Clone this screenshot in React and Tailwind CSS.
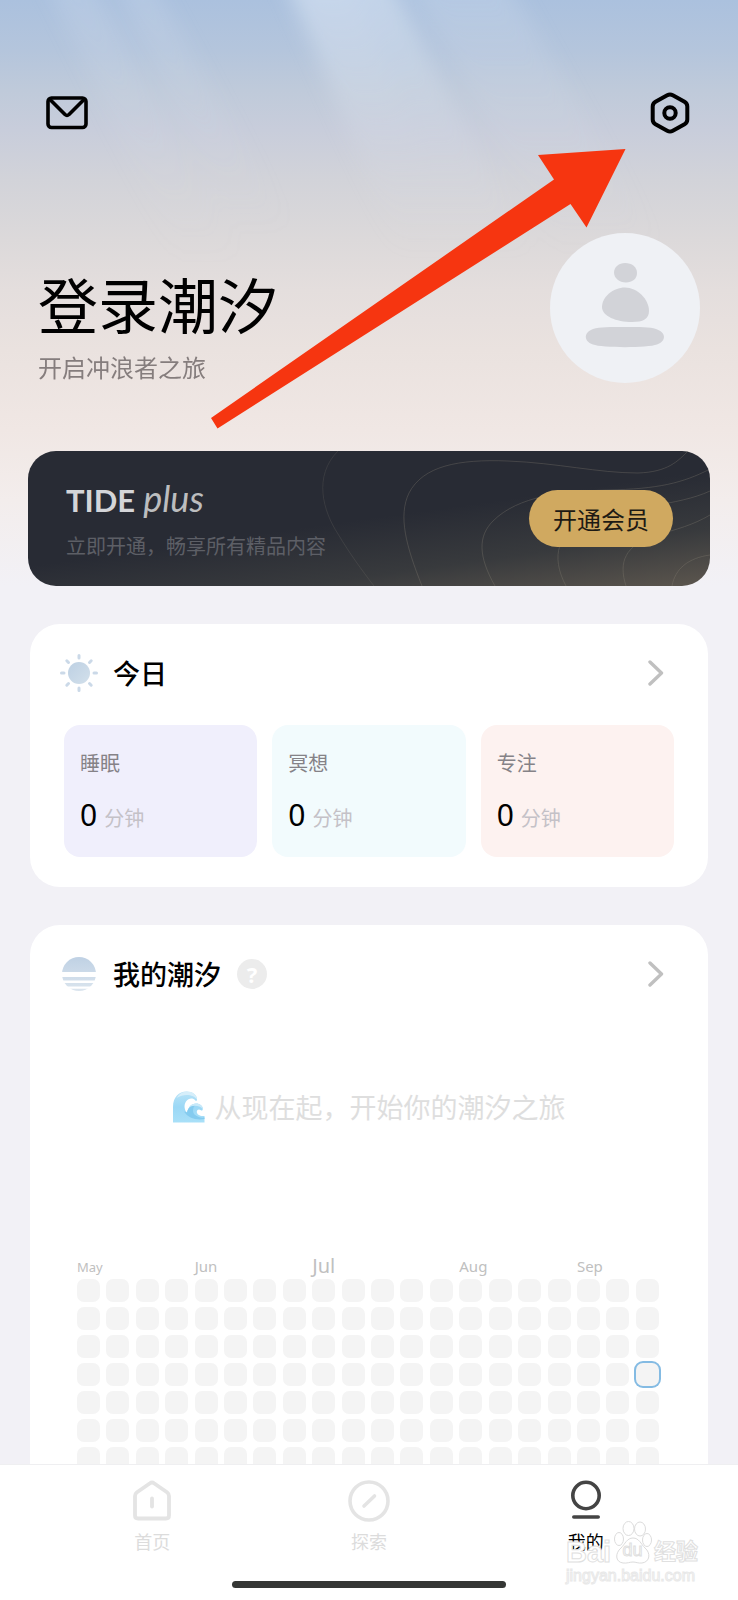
import React from 'react';

const stats = [
  { id: 'sleep', label: '睡眠', value: 0, bg: 'bg-[#f0effc]' },
  { id: 'meditation', label: '冥想', value: 0, bg: 'bg-[#f2fbfd]' },
  { id: 'focus', label: '专注', value: 0, bg: 'bg-[#fdf2f0]' },
];

const WEEKS = 20;
const DAYS = 7;
const today = { week: 19, day: 3 };

const months = {
  0: { name: 'May', size: 'text-[13px]' },
  4: { name: 'Jun', size: 'text-[15px]' },
  8: { name: 'Jul', size: 'text-[20px]' },
  13: { name: 'Aug', size: 'text-[15px]' },
  17: { name: 'Sep', size: 'text-[15px]' },
};

const MailIcon = () => (
  <svg width="42" height="34" viewBox="0 0 42 34" fill="none" stroke="#000" strokeWidth="3.6" strokeLinejoin="round" strokeLinecap="round">
    <rect x="2" y="2" width="38" height="29.5" rx="3.5" />
    <path d="M4 3.5 L19 18.5 Q21 20.3 23 18.5 L38 3.5" />
  </svg>
);

const SettingsIcon = () => (
  <svg width="40" height="42" viewBox="0 0 40 42" fill="none" stroke="#000" strokeWidth="4">
    <path d="M17.2 3.2 Q20 1.6 22.8 3.2 L34.5 9.8 Q37.3 11.5 37.3 14.6 V27.4 Q37.3 30.5 34.5 32.2 L22.8 38.8 Q20 40.4 17.2 38.8 L5.5 32.2 Q2.7 30.5 2.7 27.4 V14.6 Q2.7 11.5 5.5 9.8 Z" />
    <circle cx="20" cy="21" r="5.7" />
  </svg>
);

const AvatarIcon = () => (
  <svg className="w-full h-full" viewBox="0 0 150 150" fill="#d2d3d8">
    <path d="M75 30 C82 30 87 34 87 40 C87 46 82 49.500 76 49.500 C69 49.500 64 45 64 39.500 C64 34 69 30 75 30 Z" />
    <path d="M75 54.500 C87 54.500 99 66 99 78 C99 86 93 89 82 89 C66 89 52 83 52 74 C52 64 63 54.500 75 54.500 Z" />
    <path d="M75 94 C90 94 100 94 106 96 C116 99 117 108 107 111.500 C98 115 52 115 43 111.500 C33 108 34 99 43 96 C50 94 60 94 75 94 Z" />
  </svg>
);

const SunIcon = () => (
  <svg width="38" height="38" viewBox="0 0 38 38" fill="none">
    <defs>
      <linearGradient id="sun" x1="0" y1="0" x2="1" y2="1">
        <stop offset="0" stopColor="#bdd0e3" />
        <stop offset="1" stopColor="#d3e0eb" />
      </linearGradient>
    </defs>
    <circle cx="19" cy="19" r="11" fill="url(#sun)" />
    <g stroke="#cbd9e8" strokeWidth="3" strokeLinecap="round">
      <path d="M19 1.500V4M19 34V36.500M1.500 19H4M34 19H36.500M6.800 6.800L8.500 8.500M29.500 29.500L31.200 31.200M6.800 31.200L8.500 29.500M29.500 8.500L31.200 6.800" />
    </g>
  </svg>
);

const TideIcon = () => (
  <svg width="38" height="38" viewBox="0 0 38 38">
    <defs>
      <linearGradient id="tide" x1="0" y1="0" x2="0" y2="1">
        <stop offset="0" stopColor="#bfd1e4" />
        <stop offset="1" stopColor="#dbe5ee" />
      </linearGradient>
      <clipPath id="tide-bands">
        <path d="M0 0H38V17H0ZM0 22H38V25.500H0ZM0 28H38V31.500H0ZM0 33.800H38V38H0Z" />
      </clipPath>
    </defs>
    <circle cx="19" cy="19" r="17" fill="url(#tide)" clipPath="url(#tide-bands)" />
  </svg>
);

const WaveIcon = () => (
  <svg width="32" height="32" viewBox="0 0 32 32">
    <defs>
      <linearGradient id="wave" x1="0" y1="0" x2="0" y2="1">
        <stop offset="0" stopColor="#b9e3f7" />
        <stop offset="0.5" stopColor="#9bd8f6" />
        <stop offset="1" stopColor="#a9e0f8" />
      </linearGradient>
    </defs>
    <path d="M0 31.500V16C0 6 6 0.500 13.500 0.500C19.500 0.500 24 4 24 8.500C24 9.800 23.200 10.500 22.300 9.500C20 6.500 15.500 7 13 10.500C10.500 14 11.500 19.500 14 21.500C15 16.500 18.500 12.500 23 12.500C27 12.500 30 15 29.800 18C29.600 19.800 28.500 19.800 27.500 18.900C26 17.800 24 18.500 23.800 20.500C23.600 23.500 27 25.500 31.500 25V31.500Z" fill="url(#wave)" />
    <path d="M3.500 7C6.500 2.500 10 0.500 13.500 0.500C19.500 0.500 24 4 24 8.500C21 3.500 11 2 3.500 7Z" fill="#d6eefa" />
    <path d="M14 21.500C15 16.500 18.500 14.500 22 14.500C19.500 17 19.500 21 21.500 23.500C24 26 28 27 31.500 26.500V28C23 29.500 15 27 11 20.500Z" fill="#84cbef" />
    <path d="M16 16C18 13 21 12.500 23 12.500C27 12.500 30 15 29.800 18C26.500 14.500 21 14 16 16Z" fill="#c8e9f9" />
  </svg>
);

const ChevronIcon = () => (
  <svg width="16" height="26" viewBox="0 0 16 26" fill="none" stroke="#c0c0c0" strokeWidth="3.400" strokeLinecap="round" strokeLinejoin="round">
    <path d="M2 2L13.500 13L2 24" />
  </svg>
);

const HomeIcon = () => (
  <svg width="42" height="42" viewBox="0 0 42 42" fill="none" stroke="#e4e4e4" strokeWidth="3.800" strokeLinecap="round" strokeLinejoin="round">
    <path d="M19 3.300Q21 1.800 23 3.300L36 12.200Q38 13.700 38 16V35.500Q38 38.500 35 38.500H7Q4 38.500 4 35.500V16Q4 13.700 6 12.200Z" />
    <path d="M21 18.500V26.500" />
  </svg>
);

const ExploreIcon = () => (
  <svg width="42" height="42" viewBox="0 0 42 42" fill="none" stroke="#e4e4e4" strokeWidth="3.600" strokeLinecap="round">
    <circle cx="21" cy="21" r="19" />
    <path d="M16 26L26.500 16" />
  </svg>
);

const MineIcon = () => (
  <svg width="42" height="42" viewBox="0 0 42 42" fill="none" stroke="#444" strokeWidth="3.600" strokeLinecap="round">
    <circle cx="21" cy="15.500" r="13.200" />
    <path d="M8.800 37H33.200" />
  </svg>
);

const SkyRays = () => (
  <svg className="absolute inset-x-0 top-0 w-full h-[300px]" viewBox="0 0 738 300" preserveAspectRatio="none" aria-hidden="true">
    <defs>
      <linearGradient id="ray" x1="0" y1="0" x2="0" y2="1">
        <stop offset="0" stopColor="#dbe8f6" stopOpacity="0.55" />
        <stop offset="1" stopColor="#dcdce4" stopOpacity="0" />
      </linearGradient>
      <filter id="soft" x="-20%" y="-20%" width="140%" height="140%">
        <feGaussianBlur stdDeviation="10" />
      </filter>
    </defs>
    <g fill="url(#ray)" filter="url(#soft)">
      <path d="M280 -30H385L530 250H400Z" />
      <path d="M280 -30H345L430 180H370Z" opacity="0.25" />
      <path d="M400 -30H500L660 250H560Z" opacity="0.45" />
      <path d="M40 -30H85L240 260H180Z" opacity="0.4" />
      <path d="M110 -30H145L290 230H230Z" opacity="0.4" />
    </g>
  </svg>
);

const CardHeader = ({ icon, title, extra }) => (
  <div className="flex items-center h-10 pl-[30px] pr-11">
    {icon}
    <h2 className="ml-[15px] text-[27px] leading-10 font-medium text-black">{title}</h2>
    {extra}
    <button className="ml-auto" aria-label={title}>
      <ChevronIcon />
    </button>
  </div>
);

const PlusCard = () => (
  <section className="relative mx-7 mt-[68px] h-[135px] rounded-[28px] overflow-hidden flex items-center justify-between pl-[38px] pr-[37px] bg-[#282b34] bg-[linear-gradient(172deg,#282b34_50%,#383a3d_75%,#5c564e_100%)]">
    <svg className="absolute inset-0 w-full h-full" viewBox="0 0 682 135" preserveAspectRatio="none" fill="none" stroke="#8b8578" strokeOpacity="0.3" aria-hidden="true">
      <path d="M310 0C285 25 295 60 310 83C322 103 333 118 346 135" strokeOpacity="0.18" />
      <path d="M394 135C378 95 370 65 381 42C395 15 430 8 480 10C530 12 570 22 610 22C640 21 650 10 660 0" />
      <path d="M467 135C450 105 450 85 465 70C490 45 535 40 580 39C630 38 655 32 682 18" />
      <path d="M538 135C522 105 530 80 560 70C600 55 650 55 682 40" />
      <path d="M598 135C590 110 598 95 625 85C650 78 665 74 682 64" />
      <path d="M644 135C647 118 660 107 682 104" />
    </svg>
    <div className="relative">
      <div className="flex items-baseline gap-2 leading-10 text-[#d4d5d8]">
        <span className="font-['Lato',sans-serif] text-[31px] font-bold">TIDE</span>
        <span className="font-['Lato',sans-serif] text-[36px] italic text-[#bcbdbf]">plus</span>
      </div>
      <p className="mt-3 text-[20px] leading-7 text-[#5d5f66]">立即开通，畅享所有精品内容</p>
    </div>
    <button className="relative h-[57px] px-6 rounded-full bg-[#d0a960] text-[24px] leading-8 text-[#1d1a14]">
      开通会员
    </button>
  </section>
);

const TodayCard = () => (
  <section className="mx-[30px] mt-[38px] pt-[29px] pb-[30px] rounded-[30px] bg-white">
    <CardHeader icon={<SunIcon />} title="今日" />
    <div className="mt-8 px-[34px] grid grid-cols-3 gap-[15px]">
      {stats.map((item) => (
        <div key={item.id} className={`${item.bg} h-[132px] rounded-2xl px-4 pt-6`}>
          <p className="text-[20px] leading-7 text-[#858287]">{item.label}</p>
          <p className="mt-5 flex items-baseline gap-[7px] leading-9">
            <span className="font-['Noto_Sans',sans-serif] text-[30px] text-black">{item.value}</span>
            <span className="text-[20px] text-[#c4c1c7]">分钟</span>
          </p>
        </div>
      ))}
    </div>
  </section>
);

const Heatmap = () => (
  <div className="mt-[126px] pl-[47px] pr-[49px] flex justify-between">
    {Array.from({ length: WEEKS }, (_, week) => (
      <div key={week} className="w-[23px] flex flex-col gap-[5px]">
        <div className="h-[22px] -mb-px leading-[26px] whitespace-nowrap font-['Noto_Sans',sans-serif] text-[#c0c0c0]">
          {months[week] && <span className={months[week].size}>{months[week].name}</span>}
        </div>
        {Array.from({ length: DAYS }, (_, day) => (
          <div
            key={day}
            className={`w-[23px] h-[23px] rounded-[7px] bg-[#f4f4f4] ${
              week === today.week && day === today.day ? 'ring-2 ring-[#84bbe3]' : ''
            }`}
          />
        ))}
      </div>
    ))}
  </div>
);

const TideCard = () => (
  <section className="mx-[30px] mt-[38px] pt-[29px] pb-10 rounded-[30px] bg-white">
    <CardHeader
      icon={<TideIcon />}
      title="我的潮汐"
      extra={
        <button className="ml-4 w-[30px] h-[30px] rounded-full bg-[#ececec] font-['Noto_Sans',sans-serif] text-[22px] leading-[30px] font-bold text-white">
          ?
        </button>
      }
    />
    <div className="mt-[93px] flex items-center justify-center gap-2.5 text-[27px] leading-10 text-[#dedede]">
      <WaveIcon />
      <p>从现在起，开始你的潮汐之旅</p>
    </div>
    <Heatmap />
  </section>
);

const Watermark = () => (
  <div className="absolute right-10 bottom-3 w-[132px] text-white pointer-events-none font-['Liberation_Sans','Noto_Sans_CJK_SC',sans-serif] [-webkit-text-stroke:1px_#e0e0e0]">
    <div className="flex items-end justify-between h-11">
      <span className="text-[29px] leading-6 font-bold">Bai</span>
      <span className="relative w-[38px] h-[43px]">
        <svg className="absolute inset-0" width="38" height="43" viewBox="0 0 38 43" fill="#fff" stroke="#dcdcdc">
          <ellipse cx="14.500" cy="7.500" rx="5.500" ry="7" />
          <ellipse cx="26" cy="8" rx="5.500" ry="7" />
          <ellipse cx="5" cy="18" rx="4.500" ry="6.500" />
          <ellipse cx="33" cy="19" rx="4.500" ry="6.500" />
          <path d="M19 17C25 17 27 23 31 27C37 32 36 41 28 42C24 42.500 22 41 19 41C16 41 13 42.500 9 42C1 41 1 32 7 27C11 23 13 17 19 17Z" />
        </svg>
        <span className="absolute inset-x-0 bottom-1 text-center text-[18px] leading-5">du</span>
      </span>
      <span className="text-[22px] leading-6 font-bold">经验</span>
    </div>
    <p className="text-[16px] leading-6 [-webkit-text-stroke:1px_#e8e8e8]">jingyan.baidu.com</p>
  </div>
);

const TabBar = () => (
  <nav className="relative shrink-0 bg-white border-t border-[#efeff1]">
    <div className="px-11 pt-[15px] grid grid-cols-3 text-[18px] leading-6 text-[#dcdcdc]">
      <a href="#home" className="flex flex-col items-center gap-[7px]">
        <HomeIcon />
        首页
      </a>
      <a href="#explore" className="flex flex-col items-center gap-[7px]">
        <ExploreIcon />
        探索
      </a>
      <a href="#mine" className="flex flex-col items-center gap-[7px] text-black">
        <MineIcon />
        我的
      </a>
    </div>
    <div className="mx-auto mt-7 mb-3 w-[37%] h-[7px] rounded-full bg-[#353735]" />
    <Watermark />
  </nav>
);

const App = () => {
  return (
    <div className="h-screen flex flex-col bg-[#f2f1f6] font-['Noto_Sans_CJK_SC',sans-serif]">
      <main className="relative flex-1 min-h-0 overflow-y-auto [scrollbar-width:none] bg-[linear-gradient(to_bottom,#abc1de_0px,#b4c5dc_50px,#bfcada_90px,#c8cddb_130px,#d2d3d9_180px,#dcd9da_240px,#e4dedd_290px,#eae2df_350px,#f0e7e4_430px,#f3edec_500px,#f2f1f6_585px)]">
        <SkyRays />

        <header className="relative pt-[92px]">
          <div className="flex items-center justify-between pl-[46px] pr-12">
            <button aria-label="消息">
              <MailIcon />
            </button>
            <button aria-label="设置">
              <SettingsIcon />
            </button>
          </div>
          <div className="mt-[99px] flex items-end justify-between px-[38px]">
            <div>
              <h1 className="text-[60px] leading-[64px] text-black">登录潮汐</h1>
              <p className="mt-4 text-[24px] leading-8 text-[#857d7d]">开启冲浪者之旅</p>
            </div>
            <div className="w-[150px] h-[150px] rounded-full bg-[#eff1f5]">
              <AvatarIcon />
            </div>
          </div>
          {/* Pointer to the settings button */}
          <svg className="absolute left-0 top-0 w-full h-[440px] pointer-events-none" viewBox="0 0 738 440" preserveAspectRatio="none" aria-hidden="true">
            <path d="M625.500 149L538 155L554 179.500L211 418L217.500 428.500L570.500 204L586.500 227.500Z" fill="#f63510" />
          </svg>
        </header>

        <PlusCard />
        <TodayCard />
        <TideCard />
      </main>
      <TabBar />
    </div>
  );
};

export default App;
